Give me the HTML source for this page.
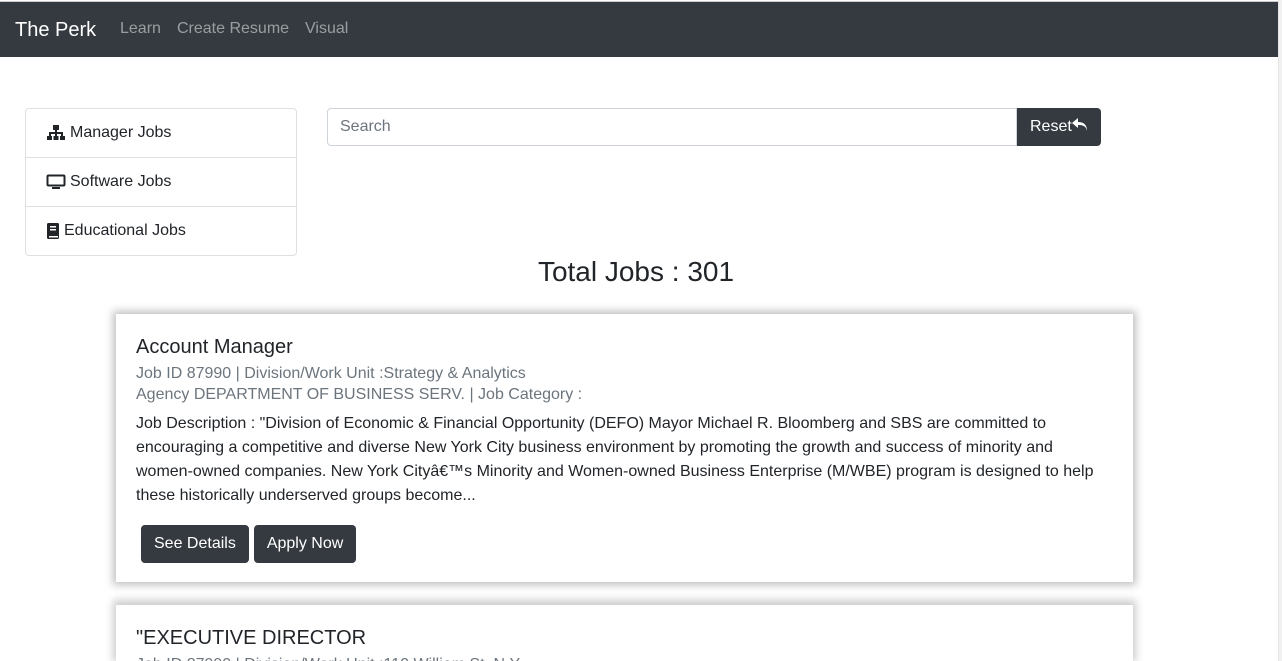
<!DOCTYPE html>
<html><head><style>
html,body{margin:0;width:1282px;height:661px;overflow:hidden}
body{font-family:"Liberation Sans",sans-serif;background:#fff;position:relative;color:#212529}
.nav{position:absolute;left:0;top:1px;width:1280px;height:56px;background:#343a40;border-top:1px solid #ccc;box-sizing:border-box}
.nav .b{position:absolute;left:15px;top:17px;font-size:20px;color:#fff}
.nav a{position:absolute;top:18px;font-size:16px;color:rgba(255,255,255,.5)}
.sb{position:absolute;right:0;top:0;width:3px;height:661px;background:#f1f1f1;border-left:1px solid #e5e5e5}
.list{position:absolute;left:25px;top:108px;width:270px;border:1px solid #dfdfdf;border-radius:4px}
.list div{height:48px;line-height:48px;padding-left:20px;font-size:16px;border-top:1px solid #dfdfdf;display:flex;align-items:center;gap:4px}
.list div:first-child{border-top:none}
.search{position:absolute;left:327px;top:108px;width:690px;height:38px;border:1px solid #ced4da;border-radius:4px 0 0 4px;box-sizing:border-box;padding-left:12px;line-height:36px;color:#6c757d;font-size:16px}
.reset{position:absolute;left:1017px;top:108px;width:84px;height:38px;background:#343a40;border-radius:0 4px 4px 0;color:#fff;font-size:16px;line-height:38px;padding-left:13px;box-sizing:border-box}
.total{position:absolute;left:0;width:1272px;text-align:center;top:256px;font-size:28px}
.card{position:absolute;left:116px;width:1017px;background:#fff;box-shadow:0 0 8px 3px rgba(0,0,0,.25);box-sizing:border-box;padding:21px 20px 20px}
.card h3{margin:0;font-weight:normal;font-size:20px;line-height:24px}
.meta{color:#6c757d;font-size:16px;line-height:21px;margin-top:4px}
.desc{font-size:16px;line-height:24px;margin-top:7px}
.btn{display:inline-block;background:#343a40;color:#fff;border-radius:4px;height:38px;line-height:38px;padding:0 13px;font-size:16px;margin-right:5px}
</style></head><body>
<div class="nav"><span class="b">The Perk</span><a style="left:120px">Learn</a><a style="left:177px">Create Resume</a><a style="left:305px">Visual</a></div>
<div class="sb"></div>
<div class="list">
<div><svg width="20" height="16" viewBox="0 0 20 16"><rect x="7" y="0" width="6" height="5" fill="#212529"/><rect x="9" y="5" width="2" height="3" fill="#212529"/><rect x="3" y="7" width="14" height="2" fill="#212529"/><rect x="3" y="7" width="2" height="4" fill="#212529"/><rect x="15" y="7" width="2" height="4" fill="#212529"/><rect x="9" y="7" width="2" height="4" fill="#212529"/><rect x="1" y="11" width="5" height="4" fill="#212529"/><rect x="7.5" y="11" width="5" height="4" fill="#212529"/><rect x="14" y="11" width="5" height="4" fill="#212529"/></svg>Manager Jobs</div>
<div><svg width="20" height="16" viewBox="0 0 20 16"><rect x="1.5" y="1.5" width="17" height="10" rx="1" fill="none" stroke="#212529" stroke-width="2"/><rect x="6" y="13" width="8" height="2" fill="#212529"/></svg>Software Jobs</div>
<div><svg width="14" height="16" viewBox="0 0 14 16"><rect x="1" y="0" width="12" height="16" rx="1.5" fill="#212529"/><rect x="4" y="3" width="6" height="1.5" fill="#fff"/><rect x="4" y="6" width="6" height="1.5" fill="#fff"/><rect x="3" y="13" width="9" height="1.5" fill="#fff"/></svg>Educational Jobs</div>
</div>
<div class="search">Search</div>
<div class="reset">Reset<svg width="18" height="15" viewBox="0 0 18 15" style="vertical-align:-1px"><path d="M6 1L0 6l6 5V8c5 0 8 1 9 6 0-6-3-9-9-9z" fill="#fff"/></svg></div>
<div class="total">Total Jobs : 301</div>
<div class="card" style="top:314px;height:268px">
<h3>Account Manager</h3>
<div class="meta">Job ID 87990 | Division/Work Unit :Strategy &amp; Analytics<br>Agency DEPARTMENT OF BUSINESS SERV. | Job Category :</div>
<div class="desc">Job Description : "Division of Economic &amp; Financial Opportunity (DEFO) Mayor Michael R. Bloomberg and SBS are committed to encouraging a competitive and diverse New York City business environment by promoting the growth and success of minority and women-owned companies. New York Cityâ€™s Minority and Women-owned Business Enterprise (M/WBE) program is designed to help these historically underserved groups become...</div>
<div style="margin-top:17px;padding-left:5px"><span class="btn">See Details</span><span class="btn">Apply Now</span></div>
</div>
<div class="card" style="top:605px;height:56px;box-shadow:0 -2px 8px 3px rgba(0,0,0,.2)">
<h3>"EXECUTIVE DIRECTOR</h3>
<div class="meta">Job ID 87990 | Division/Work Unit :110 William St. N.Y.</div>
</div>
</body></html>
